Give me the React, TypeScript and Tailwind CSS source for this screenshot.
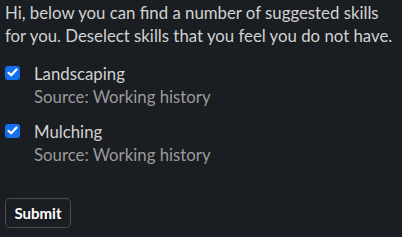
import React from "react";

function Check() {
  return (
    <span className="mt-[4px] flex h-[14px] w-[15px] shrink-0 items-center justify-center rounded-[3px] bg-[#1270f0]">
      <svg width="11" height="9" viewBox="0 0 11 9" fill="none">
        <path d="M1.5 4.8 L4.2 7.3 L9.5 1.5" stroke="white" strokeWidth="2.2" strokeLinecap="round" strokeLinejoin="round" />
      </svg>
    </span>
  );
}

function Skill({ name }: { name: string }) {
  return (
    <div className="flex gap-[14px]">
      <Check />
      <div className="flex flex-col">
        <span className="text-[#d1d2d3]">{name}</span>
        <span className="text-[#9a9b9e]">Source: Working history</span>
      </div>
    </div>
  );
}

export default function App() {
  return (
    <div
      className="h-[237px] w-[402px] bg-[#1a1d21] pl-[5px] pt-[0.5px] text-[16.8px] leading-[23.5px] text-[#d1d2d3]"
      style={{ fontFamily: "Lato, 'Liberation Sans', sans-serif" }}
    >
      <p>Hi, below you can find a number of suggested skills for you. Deselect skills that you feel you do not have.</p>
      <div className="mt-[14px] flex flex-col gap-[11px]">
        <Skill name="Landscaping" />
        <Skill name="Mulching" />
      </div>
      <button className="mt-[31px] h-[30px] w-[66px] rounded-[5px] border border-[#4a4c50] text-[15px] font-bold leading-[22px] text-white">
        Submit
      </button>
    </div>
  );
}
